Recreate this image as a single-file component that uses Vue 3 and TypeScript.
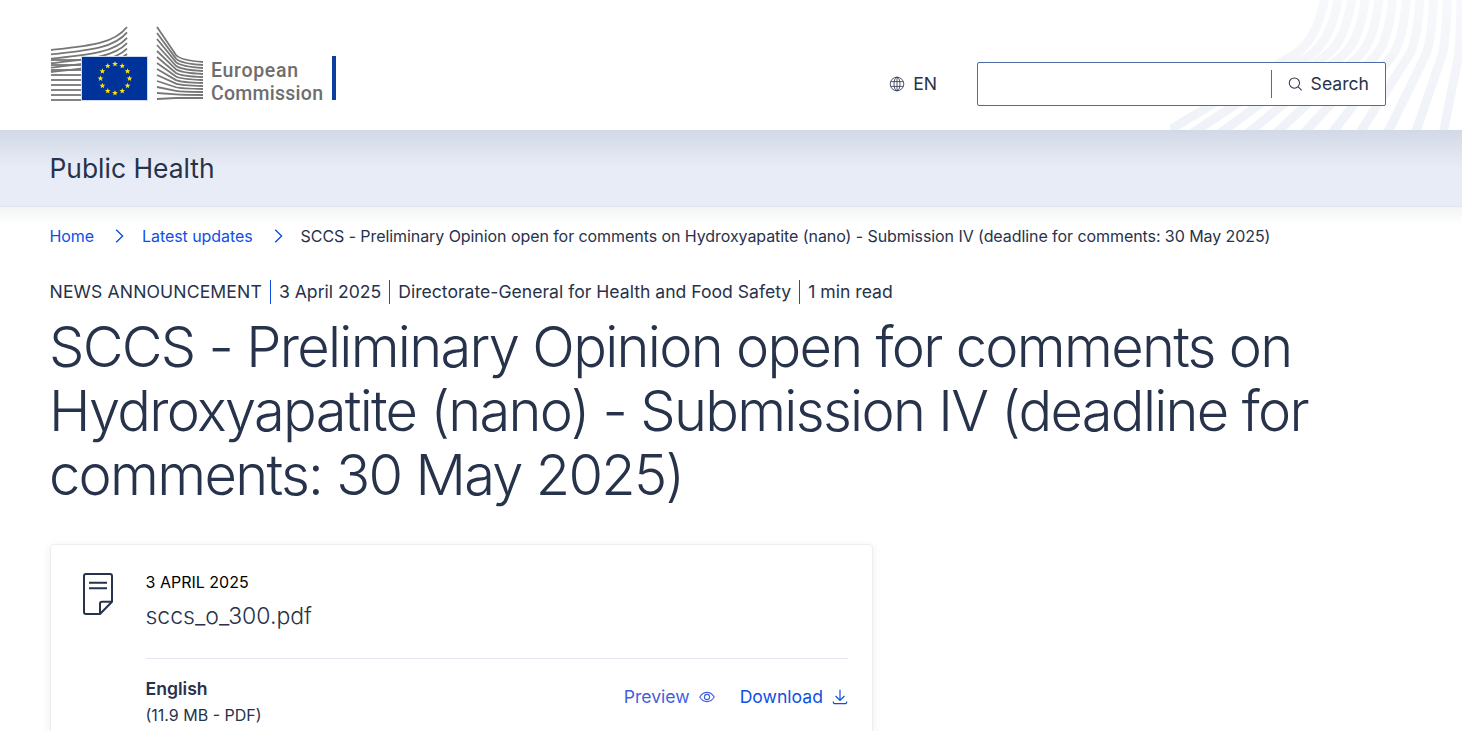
<script setup lang="ts">
const crumbs = ['Home', 'Latest updates']
const metaItems = ['NEWS ANNOUNCEMENT', '3 April 2025', 'Directorate-General for Health and Food Safety', '1 min read']

function star(cx: number, cy: number, r: number) {
  const pts: string[] = []
  for (let i = 0; i < 10; i++) {
    const radius = i % 2 === 0 ? r : r * 0.42
    const angle = (Math.PI / 5) * i - Math.PI / 2
    pts.push(`${(cx + radius * Math.cos(angle)).toFixed(2)},${(cy + radius * Math.sin(angle)).toFixed(2)}`)
  }
  return pts.join(' ')
}

const stars = Array.from({ length: 12 }, (_, i) => {
  const angle = (Math.PI / 6) * i
  return star(64 + 14.5 * Math.sin(angle), 52.5 - 14.5 * Math.cos(angle), 3)
})

// Left wing of the Berlaymont mark: flat bars, the upper ones sweep up to the right
const leftCurves = Array.from({ length: 6 }, (_, i) => {
  const y = 24 + i * 4.4
  const endY = 1 + i * 5.4
  return `M1 ${y} C38 ${y - 4} 64 ${y - 6} 77 ${endY}`
})
const leftBars = Array.from({ length: 9 }, (_, i) => 34 + i * 5)

// Right wing: diagonal from the tall left edge, then a knee into near-flat bars
const rightCurves = Array.from({ length: 13 }, (_, i) => {
  const y0 = 1 + i * 6
  const y1 = 36 + i * 3
  const sag = 1 - i / 12
  const kneeY = y1 - 5 * sag
  return `M107 ${y0} L126 ${kneeY - 2 * sag} Q131 ${kneeY + 3.5 * sag} 153 ${y1}`
})

// Decorative stripes behind the search box
const stripes = Array.from({ length: 11 }, (_, i) => {
  const bottom = -1 + 28 * i
  const top = 155 + 13.6 * i
  const elbow = bottom + (top - bottom) * 0.8
  return `M${bottom - 6} 134 L${elbow} 55 C${elbow + (top - elbow) * 0.4} 47 ${top - (top - elbow) * 0.2} 32 ${top} -4`
})
</script>

<template>
  <div class="page">
    <header class="site-header">
      <svg class="header-stripes" viewBox="0 0 292 130" aria-hidden="true">
        <defs>
          <linearGradient id="stripe-fade" gradientUnits="userSpaceOnUse" x1="0" y1="0" x2="0" y2="130">
            <stop offset="0" stop-color="#f7f8fb" />
            <stop offset="1" stop-color="#eff2f8" />
          </linearGradient>
        </defs>
        <path v-for="(d, i) in stripes" :key="i" :d="d" stroke="url(#stripe-fade)" />
      </svg>
      <a class="logo" aria-label="European Commission">
        <svg width="287" height="80" viewBox="0 0 287 80">
          <g class="logo-lines">
            <path v-for="(d, i) in leftCurves" :key="i" :d="d" />
            <path v-for="(y, i) in leftBars" :key="'b' + i" :d="`M1 ${y} H31`" />
            <path v-for="(d, i) in rightCurves" :key="'r' + i" :d="d" />
          </g>
          <rect x="31.5" y="30.5" width="66" height="44" fill="#003399" stroke="#cfdcf0" />
          <polygon v-for="(p, i) in stars" :key="'s' + i" :points="p" fill="#ffe600" transform="translate(1 0)" />
          <text class="logo-text" x="161" y="51" textLength="87">European</text>
          <text class="logo-text" x="161" y="74" textLength="112">Commission</text>
          <rect x="282" y="30" width="4" height="44" fill="#0b3f9e" />
        </svg>
      </a>
      <div class="header-actions">
        <a class="language">
          <svg class="globe" width="16" height="16" viewBox="0 0 16 16" fill="none" stroke="currentColor" stroke-width="0.8">
            <circle cx="8" cy="8" r="6.8" />
            <ellipse cx="8" cy="8" rx="3" ry="6.8" />
            <path d="M8 1.2v13.6M1.8 5.6h12.4M1.8 10.4h12.4" />
          </svg>
          <span class="label">EN</span>
        </a>
        <form class="search" @submit.prevent>
          <input class="search-input" type="text" aria-label="Search" />
          <button class="search-button" type="button">
            <svg width="16" height="16" viewBox="0 0 16 16" fill="none" stroke="currentColor" stroke-width="1.1">
              <circle cx="7" cy="7" r="5.6" />
              <path d="M11.2 11.2 15 15" />
            </svg>
            <span class="label">Search</span>
          </button>
        </form>
      </div>
    </header>

    <div class="site-band">Public Health</div>

    <nav class="breadcrumb" aria-label="Breadcrumb">
      <template v-for="crumb in crumbs" :key="crumb">
        <a class="link">{{ crumb }}</a>
        <svg class="crumb-sep" width="9" height="14" viewBox="0 0 9 14" fill="none" stroke="currentColor" stroke-width="1.4">
          <path d="M1.2 .8 7.6 7 1.2 13.2" />
        </svg>
      </template>
      <span>SCCS - Preliminary Opinion open for comments on Hydroxyapatite (nano) - Submission IV (deadline for comments: 30 May 2025)</span>
    </nav>

    <main class="content">
      <ul class="meta">
        <li v-for="item in metaItems" :key="item">{{ item }}</li>
      </ul>
      <h1 class="title">SCCS - Preliminary Opinion open for comments on Hydroxyapatite (nano) - Submission IV (deadline for comments: 30 May 2025)</h1>

      <section class="file-card">
        <svg class="file-icon" width="30" height="42" viewBox="0 0 30 42" fill="none" stroke="currentColor" stroke-width="2" stroke-linejoin="round">
          <path d="M3 1h24a2 2 0 0 1 2 2v25.7L17 41H3a2 2 0 0 1-2-2V3a2 2 0 0 1 2-2Z" />
          <path d="M29 28.7H19a2 2 0 0 0-2 2V41" />
          <path d="M6 9.7h18M6 15.3h18" />
        </svg>
        <div class="file-body">
          <div class="file-date">3 APRIL 2025</div>
          <div class="file-name">sccs_o_300.pdf</div>
          <div class="file-row">
            <div>
              <div class="file-lang">English</div>
              <div class="file-size">(11.9 MB - PDF)</div>
            </div>
            <div class="file-actions">
              <a class="link preview">
                Preview
                <svg width="16" height="16" viewBox="0 0 16 16" fill="none" stroke="currentColor" stroke-width="1.1">
                  <path d="M.8 8C2.6 5 5 3.4 8 3.4S13.4 5 15.2 8C13.4 11 11 12.6 8 12.6S2.6 11 .8 8Z" />
                  <circle cx="8" cy="8" r="2.6" />
                </svg>
              </a>
              <a class="link download">
                Download
                <svg width="16" height="16" viewBox="0 0 16 16" fill="none" stroke="currentColor" stroke-width="1.2">
                  <path d="M8 .8v10.4M3.6 7 8 11.4 12.4 7M1.4 12.4v1.2a1 1 0 0 0 1 1h11.2a1 1 0 0 0 1-1v-1.2" />
                </svg>
              </a>
            </div>
          </div>
        </div>
      </section>
    </main>
  </div>
</template>

<style>
html,
body {
  background: #fff;
}
</style>

<style scoped>
.page {
  color: #27324b;
  font-family: Inter, "Liberation Sans", sans-serif;
  font-size: 16px;
  height: 731px;
  overflow: hidden;
}

.site-header {
  align-items: flex-start;
  display: flex;
  height: 130px;
  justify-content: space-between;
  padding: 0 76px 0 50px;
  position: relative;
}

.header-stripes {
  height: 130px;
  position: absolute;
  right: 0;
  top: 0;
  width: 292px;
}

.header-stripes path {
  fill: none;
  stroke-width: 9;
}

.logo {
  display: block;
  height: 80px;
  margin-top: 26px;
}

.logo svg {
  display: block;
}

.logo-lines path {
  fill: none;
  stroke: #777;
  stroke-width: 1.8;
}

.logo-text {
  fill: #6e6e6e;
  font-family: Roboto, sans-serif;
  font-size: 19.5px;
  font-weight: 500;
}

.header-actions {
  align-items: center;
  display: flex;
  gap: 40px;
  margin-top: 62px;
  position: relative;
}

.language {
  align-items: center;
  display: flex;
  font-size: 17.6px;
  gap: 8px;
}

.label {
  margin-bottom: 2px;
}

.search {
  align-items: center;
  background: #fff;
  border: 1px solid #4f6ba6;
  border-radius: 2px;
  box-sizing: border-box;
  display: flex;
  height: 44px;
  width: 409px;
}

.search-input {
  background: transparent;
  border: 0;
  flex: 1;
  height: 100%;
  min-width: 0;
  outline: 0;
}

.search-button {
  align-items: center;
  background: none;
  border: 0;
  border-left: 1px solid #4f6ba6;
  box-sizing: border-box;
  color: inherit;
  display: flex;
  font: inherit;
  font-size: 17.6px;
  gap: 8px;
  height: 28px;
  padding: 0 16px;
  width: 114px;
}

.site-band {
  background: linear-gradient(#d2d8e6, #e8ecf6 38px);
  border-bottom: 1px solid #e2e4ea;
  font-size: 26.4px;
  height: 76px;
  line-height: 77px;
  padding-left: 49.5px;
  position: relative;
}

.breadcrumb {
  align-items: center;
  background: linear-gradient(#f3f4f5, #fff 18px);
  display: flex;
  gap: 14px;
  height: 58px;
  letter-spacing: -0.07px;
  padding-left: 49.5px;
}

.crumb-sep {
  color: #0e4fe6;
  margin: 0 4px 0 7px;
}

.link {
  color: #0e4fe6;
}

.content {
  padding: 15px 50px 0;
}

.meta {
  display: flex;
  font-size: 17.6px;
  line-height: 24px;
  list-style: none;
  margin: 0 0 0 -0.5px;
  padding: 0;
}

.meta li:first-child {
  letter-spacing: 0.12px;
}

.meta li + li {
  border-left: 1px solid #0e4fe6;
  margin-left: 8px;
  padding-left: 8px;
}

.title {
  font-size: 56px;
  font-weight: 300;
  letter-spacing: -1.7px;
  line-height: 64px;
  margin: 11px 0 0 -1px;
  max-width: 1300px;
}

.file-card {
  border: 1px solid #eceef2;
  border-radius: 4px;
  box-shadow: 0 2px 8px rgba(30, 40, 70, 0.08);
  box-sizing: border-box;
  display: flex;
  height: 300px;
  margin-top: 37px;
  padding: 27px 24px 0 32px;
  width: 823px;
}

.file-icon {
  flex: none;
  margin: 1px 33px 0 0;
}

.file-body {
  flex: 1;
}

.file-date {
  color: #000;
  font-size: 16px;
  line-height: 20px;
  margin-left: -0.5px;
}

.file-name {
  font-size: 23px;
  font-weight: 300;
  line-height: 32px;
  margin: 8px 0 0 -0.5px;
}

.file-row {
  align-items: flex-start;
  border-top: 1px solid #e3e7f2;
  display: flex;
  justify-content: space-between;
  margin-top: 26px;
  padding-top: 18px;
}

.file-lang {
  font-size: 17.6px;
  font-weight: 600;
  line-height: 24px;
  margin-left: -0.5px;
}

.file-size {
  font-size: 16px;
  line-height: 20px;
  margin: 4px 0 0 -0.5px;
}

.file-actions {
  display: flex;
  gap: 25px;
  margin-top: 8px;
}

.file-actions a {
  align-items: center;
  display: flex;
  font-size: 17.6px;
  gap: 9px;
  line-height: 24px;
}

.preview {
  color: #3f5fe0;
}
</style>
